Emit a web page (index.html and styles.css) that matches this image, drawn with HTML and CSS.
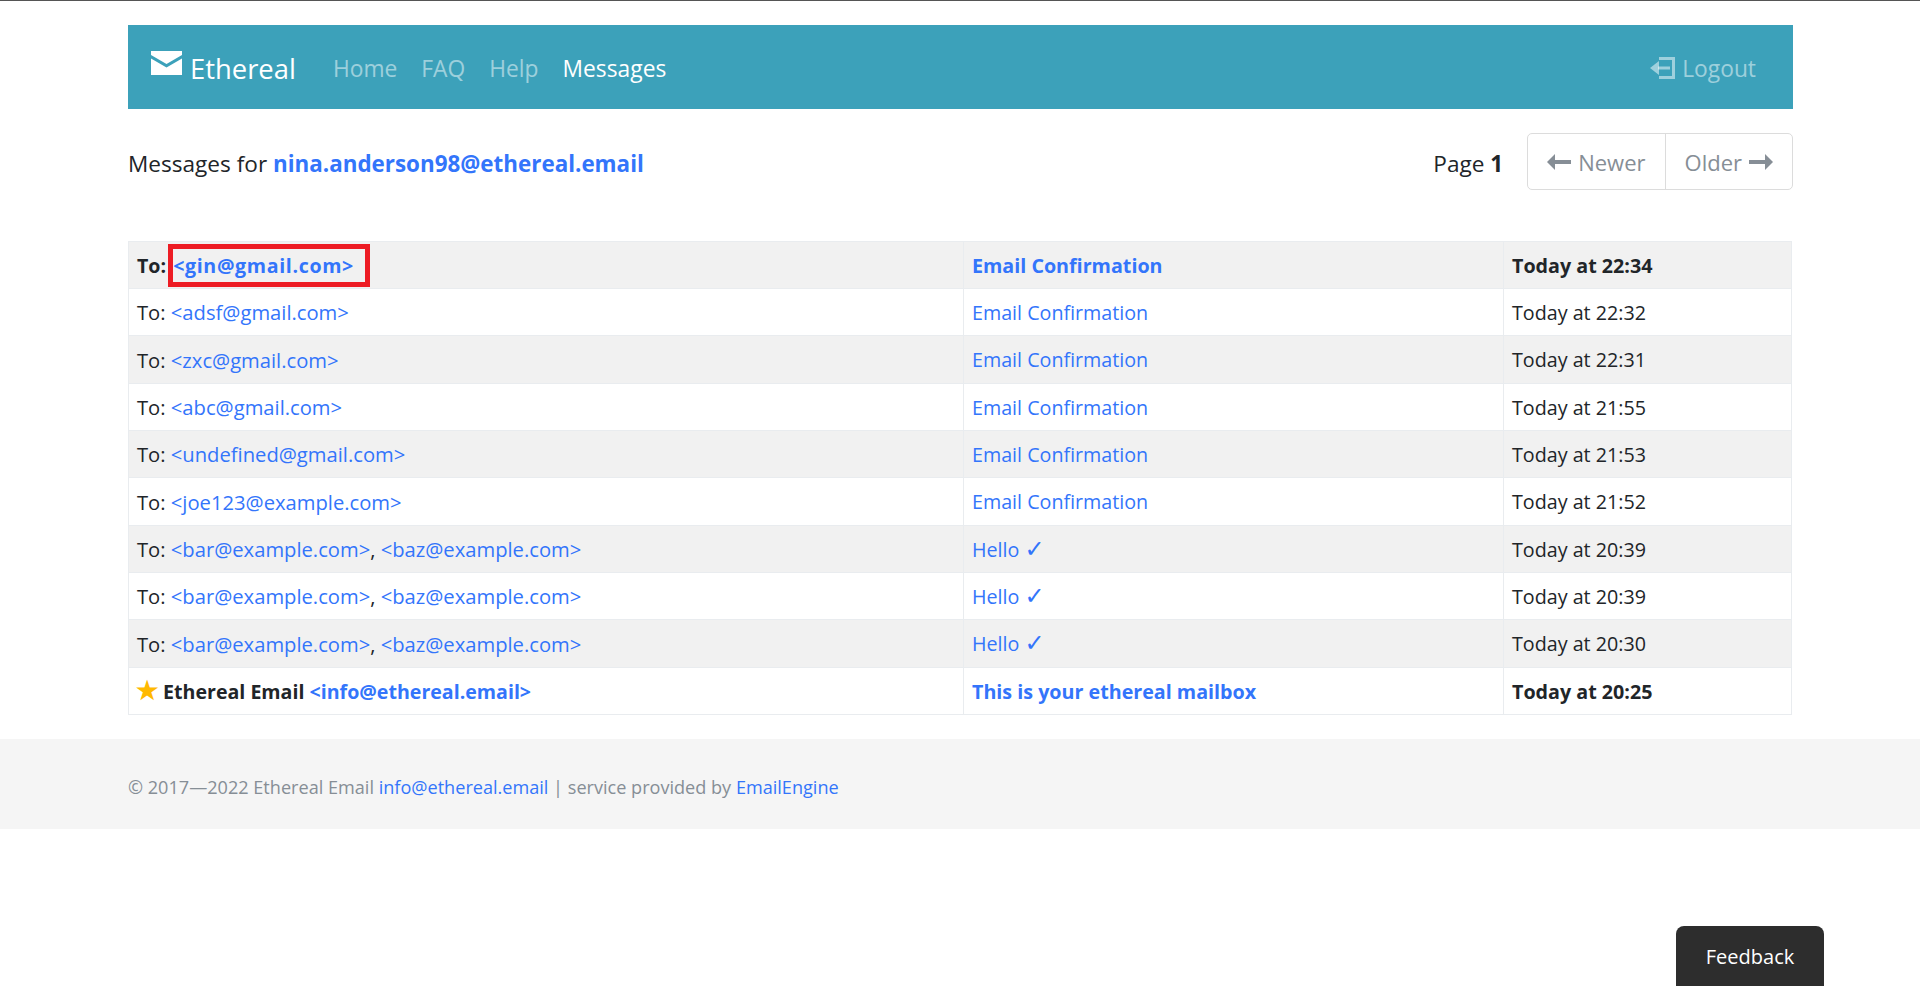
FILE: index.html
```html
<!DOCTYPE html>
<html lang="en">
<head>
<meta charset="UTF-8">
<meta name="viewport" content="width=device-width, initial-scale=1.0">
<title>Ethereal - Messages</title>
<link rel="stylesheet" href="styles.css">
</head>
<body>
<div class="container">
    <nav class="navbar">
        <a class="brand" href="#">
            <svg class="brand-icon" viewBox="0 0 31 24"><path fill="#fff" d="M0 0h31v4L15.500 13 0 4zM0 7.500l15.500 9 15.500-9V24H0z"/></svg>
            Ethereal
        </a>
        <ul class="nav-links">
            <li><a href="#">Home</a></li>
            <li><a href="#">FAQ</a></li>
            <li><a href="#">Help</a></li>
            <li><a class="active" href="#">Messages</a></li>
        </ul>
        <a class="logout" href="#">
            <svg class="logout-icon" viewBox="0 0 25 22"><path fill="none" stroke="currentColor" stroke-width="3" d="M9 1.500h14.500v19H9M8 11h12"/><path fill="currentColor" d="M0 11l9-7v14z"/></svg>
            Logout
        </a>
    </nav>

    <div class="heading">
        <div class="heading-title">Messages for <a href="#"><b>nina.anderson98@ethereal.email</b></a></div>
        <div class="pager">
            <span class="page-label">Page <b>1</b></span>
            <div class="btn-group">
                <a class="btn" href="#">
                    <svg class="arrow" viewBox="0 0 24 16"><path fill="currentColor" d="M0 8l8-8v6h16v4H8v6z"/></svg>
                    Newer
                </a>
                <a class="btn" href="#">
                    Older
                    <svg class="arrow" viewBox="0 0 24 16"><path fill="currentColor" d="M24 8l-8-8v6H0v4h16v6z"/></svg>
                </a>
            </div>
        </div>
    </div>

    <table class="messages">
        <colgroup>
            <col class="col-to">
            <col class="col-subject">
            <col class="col-date">
        </colgroup>
        <tr class="unread">
            <td>To: <a class="marked" href="#">&lt;gin@gmail.com&gt;</a></td>
            <td><a href="#">Email Confirmation</a></td>
            <td>Today at 22:34</td>
        </tr>
        <tr>
            <td>To: <a href="#">&lt;adsf@gmail.com&gt;</a></td>
            <td><a href="#">Email Confirmation</a></td>
            <td>Today at 22:32</td>
        </tr>
        <tr>
            <td>To: <a href="#">&lt;zxc@gmail.com&gt;</a></td>
            <td><a href="#">Email Confirmation</a></td>
            <td>Today at 22:31</td>
        </tr>
        <tr>
            <td>To: <a href="#">&lt;abc@gmail.com&gt;</a></td>
            <td><a href="#">Email Confirmation</a></td>
            <td>Today at 21:55</td>
        </tr>
        <tr>
            <td>To: <a href="#">&lt;undefined@gmail.com&gt;</a></td>
            <td><a href="#">Email Confirmation</a></td>
            <td>Today at 21:53</td>
        </tr>
        <tr>
            <td>To: <a href="#">&lt;joe123@example.com&gt;</a></td>
            <td><a href="#">Email Confirmation</a></td>
            <td>Today at 21:52</td>
        </tr>
        <tr>
            <td>To: <a href="#">&lt;bar@example.com&gt;</a>, <a href="#">&lt;baz@example.com&gt;</a></td>
            <td><a href="#">Hello <span class="check">✓</span></a></td>
            <td>Today at 20:39</td>
        </tr>
        <tr>
            <td>To: <a href="#">&lt;bar@example.com&gt;</a>, <a href="#">&lt;baz@example.com&gt;</a></td>
            <td><a href="#">Hello <span class="check">✓</span></a></td>
            <td>Today at 20:39</td>
        </tr>
        <tr>
            <td>To: <a href="#">&lt;bar@example.com&gt;</a>, <a href="#">&lt;baz@example.com&gt;</a></td>
            <td><a href="#">Hello <span class="check">✓</span></a></td>
            <td>Today at 20:30</td>
        </tr>
        <tr class="unread">
            <td><span class="star">★</span> Ethereal Email <a href="#">&lt;info@ethereal.email&gt;</a></td>
            <td><a href="#">This is your ethereal mailbox</a></td>
            <td>Today at 20:25</td>
        </tr>
    </table>
</div>

<footer class="footer">
    <div class="footer-inner">© 2017—2022 Ethereal Email <a href="#">info@ethereal.email</a> | service provided by <a href="#">EmailEngine</a></div>
</footer>

<button class="feedback" type="button">Feedback</button>
</body>
</html>
```

FILE: styles.css
```css
body {
    font-family: "Open Sans", "Noto Sans", sans-serif;
    font-size: 20px;
    color: #212529;
    background-color: #fff;
    margin: 0;
    padding: 0;
    border-top: 1px solid #555;
}
a {
    color: #3375fb;
    text-decoration: none;
}
.container {
    width: 1665px;
    margin: 0 0 0 128px;
    padding-top: 24px;
}
.navbar {
    display: flex;
    align-items: center;
    height: 84px;
    padding: 2px 37px 0 23px;
    background-color: #3ca1ba;
    box-sizing: border-box;
}
.brand {
    display: flex;
    align-items: center;
    gap: 8px;
    font-size: 27.4px;
    color: #fff;
    margin-right: 37px;
}
.brand-icon {
    width: 31px;
    height: 24px;
    margin-top: -10px;
}
.nav-links {
    display: flex;
    gap: 24px;
    list-style: none;
    margin: 0;
    padding: 0;
    font-size: 22.8px;
}
.nav-links a {
    color: rgba(255, 255, 255, 0.5);
}
.nav-links a.active {
    color: #fff;
}
.logout {
    display: flex;
    align-items: center;
    gap: 7px;
    margin-left: auto;
    font-size: 22.8px;
    color: rgba(255, 255, 255, 0.5);
}
.logout-icon {
    width: 25px;
    height: 22px;
}
.heading {
    display: flex;
    align-items: center;
    justify-content: space-between;
    height: 57px;
    margin-top: 24px;
    margin-bottom: 51px;
    font-size: 22.6px;
}
.heading-title,
.page-label {
    padding-top: 3px;
}
.heading-title b {
    font-size: 22.4px;
}
.pager {
    display: flex;
    align-items: center;
    gap: 24px;
}
.btn-group {
    display: flex;
    height: 57px;
    border: 1px solid #dcdcdc;
    border-radius: 5px;
    box-sizing: border-box;
    font-size: 22px;
}
.btn {
    display: flex;
    align-items: center;
    gap: 7px;
    padding: 0 19px;
    color: #868e96;
}
.btn + .btn {
    border-left: 1px solid #dcdcdc;
}
.arrow {
    width: 24px;
    height: 16px;
}
.messages {
    width: 1664px;
    table-layout: fixed;
    border-collapse: collapse;
    font-size: 19.7px;
}
.col-to {
    width: 835px;
}
.col-subject {
    width: 540px;
}
.messages tr {
    height: 47px;
}
.messages tr:nth-child(3n) {
    height: 48px;
}
.messages tr:nth-child(odd) {
    background-color: #f1f1f1;
}
.messages td {
    padding: 0 8px;
    border: 1px solid #e9ecef;
}
.messages td:first-child {
    font-size: 20.2px;
}
.messages .unread td:first-child {
    font-size: 19.6px;
}
.unread {
    font-weight: 700;
}
.marked {
    display: inline-block;
    margin-left: -3px;
    padding: 0 11px 0 0;
    border: 5px solid #ed1c24;
    line-height: 33px;
    letter-spacing: 0.65px;
}
.star {
    font-size: 1.3em;
    line-height: 1;
    margin-left: -1px;
    color: #ffb900;
}
.check {
    font-family: "DejaVu Sans", sans-serif;
    font-size: 24px;
    line-height: 1;
}
.footer {
    height: 90px;
    margin-top: 24px;
    background-color: #f5f5f5;
    color: #868e96;
    font-size: 18.1px;
}
.footer-inner {
    width: 1665px;
    margin: 0 0 0 128px;
    line-height: 97px;
}
.feedback {
    position: fixed;
    right: 96px;
    bottom: 0;
    width: 148px;
    height: 60px;
    padding: 0;
    border: none;
    border-radius: 8px 8px 0 0;
    background-color: #2d2d2d;
    color: #fff;
    font-family: inherit;
    font-size: 20px;
}
```
